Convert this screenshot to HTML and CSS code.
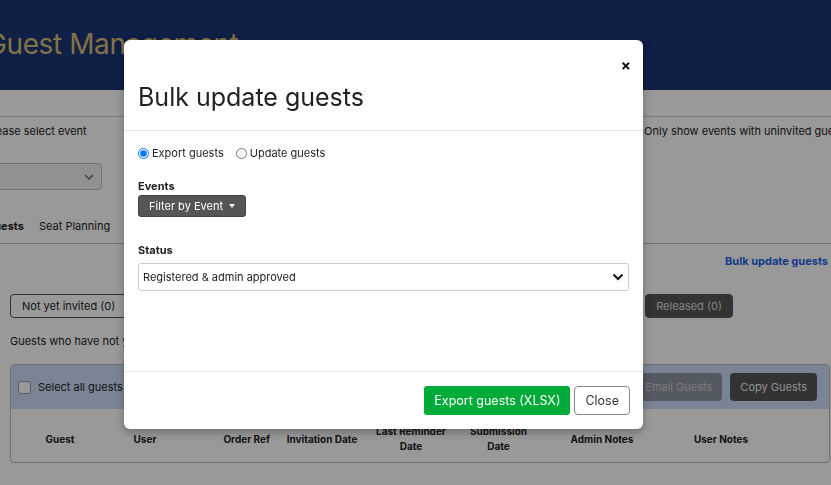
FILE: index.html
```html
<!DOCTYPE html>
<html lang="en">
<head>
    <meta charset="UTF-8">
    <title>Guest Management</title>
    <link rel="stylesheet" href="styles.css">
</head>
<body>
    <div class="page">
        <header class="page-header">
            <h1>Guest Management</h1>
        </header>

        <div class="page-body">
            <div class="event-row">
                <div class="event-pick">
                    <label class="field-label">Please select event</label>
                    <div class="fake-select">
                        <svg class="chev" width="10" height="6" viewBox="0 0 10 6"><path d="M1 1 L5 5 L9 1" fill="none" stroke="#666" stroke-width="1.4"/></svg>
                    </div>
                </div>
                <label class="uninvited">Only show events with uninvited guests</label>
            </div>

            <ul class="tabs">
                <li class="active">Guests</li>
                <li>Seat Planning</li>
            </ul>

            <div class="bulk-row"><a href="#" class="bulk-link">Bulk update guests</a></div>

            <div class="status-row">
                <button class="pill outline">Not yet invited (0)</button>
                <div class="status-mid">
                    <button class="pill dark">Invited (0)</button>
                    <button class="pill dark">Registered (0)</button>
                    <button class="pill dark">Approved (0)</button>
                    <button class="pill dark">Declined (0)</button>
                </div>
                <button class="pill dark">Released (0)</button>
            </div>

            <p class="hint">Guests who have not yet been invited to this event.</p>

            <div class="guest-table">
                <div class="toolbar">
                    <label class="select-all"><span class="box"></span>Select all guests</label>
                    <div class="toolbar-actions">
                        <button class="tb-btn muted">Email Guests</button>
                        <button class="tb-btn dark">Copy Guests</button>
                    </div>
                </div>
                <div class="thead">
                    <div class="th">Guest</div>
                    <div class="th">User</div>
                    <div class="th c-order">Order Ref</div>
                    <div class="th">Invitation Date</div>
                    <div class="th">Last Reminder<br>Date</div>
                    <div class="th">Submission<br>Date</div>
                    <div class="th">Admin Notes</div>
                    <div class="th">User Notes</div>
                </div>
            </div>
        </div>
    </div>

    <div class="backdrop"></div>

    <div class="modal">
        <div class="modal-header">
            <button class="modal-close">&times;</button>
            <h2>Bulk update guests</h2>
        </div>
        <div class="modal-body">
            <div class="radio-row">
                <label><input type="radio" name="mode" checked> Export guests</label>
                <label><input type="radio" name="mode"> Update guests</label>
            </div>

            <div class="group">
                <div class="group-label">Events</div>
                <button class="filter-btn">Filter by Event <span class="caret"></span></button>
            </div>

            <div class="group">
                <div class="group-label">Status</div>
                <div class="status-select">
                    <span>Registered &amp; admin approved</span>
                    <svg width="12" height="8" viewBox="0 0 12 8"><path d="M1.5 1.5 L6 6 L10.5 1.5" fill="none" stroke="#111" stroke-width="2"/></svg>
                </div>
            </div>
        </div>
        <div class="modal-footer">
            <button class="btn-export">Export guests (XLSX)</button>
            <button class="btn-close">Close</button>
        </div>
    </div>
</body>
</html>
```

FILE: styles.css
```css
html, body {
    margin: 0;
    padding: 0;
    height: 100%;
    overflow: hidden;
}
body {
    font-family: "Inter", "Noto Sans", sans-serif;
    font-size: 11px;
    color: #222;
    background-color: #fff;
}
button {
    font-family: inherit;
}
.page {
    margin-left: -14px;
    width: 860px;
}
.page-header {
    background-color: #193473;
    height: 90px;
    box-sizing: border-box;
    padding-top: 27px;
}
.page-header h1 {
    margin: 0;
    font-weight: 400;
    font-size: 28px;
    color: #d9c075;
    letter-spacing: -0.4px;
}
.page-body {
    padding-top: 26px;
}
.event-row {
    border-top: 1px solid #ccc;
    display: flex;
    justify-content: space-between;
    padding-top: 6px;
}
.field-label {
    display: block;
    line-height: 16px;
}
.fake-select {
    margin-top: 24px;
    width: 116px;
    height: 27px;
    border: 1px solid #bbb;
    border-radius: 4px;
    background-color: #f2f2f2;
    display: flex;
    align-items: center;
    justify-content: flex-end;
    padding-right: 7px;
    box-sizing: border-box;
}
.uninvited {
    width: 202px;
    line-height: 16px;
    white-space: nowrap;
}
.tabs {
    list-style: none;
    margin: 28px 0 0;
    padding: 0;
    display: flex;
    gap: 15px;
    border-bottom: 1px solid #bbb;
    height: 25px;
}
.tabs li {
    line-height: 16px;
}
.tabs li.active {
    font-weight: 700;
}
.bulk-row {
    display: flex;
    justify-content: flex-end;
    padding: 10px 18px 0 0;
    line-height: 14px;
}
.bulk-link {
    color: #1e62e6;
    font-weight: 700;
    text-decoration: none;
}
.status-row {
    display: flex;
    gap: 8px;
    margin-top: 26px;
    padding-left: 24px;
}
.status-mid {
    flex: 0 0 502px;
    display: flex;
    gap: 8px;
    overflow: hidden;
}
.pill {
    font-size: 11px;
    height: 24px;
    padding: 0 10px;
    border-radius: 4px;
}
.pill.outline {
    background: #fff;
    border: 1px solid #555;
    color: #222;
    padding: 0 11px;
}
.pill.dark {
    background: #555;
    border: 1px solid #555;
    color: #ddd;
}
.hint {
    margin: 15px 0 0 24px;
    line-height: 16px;
}
.guest-table {
    margin: 15px 0 0 24px;
    width: 818px;
    border: 1px solid #bbb;
    border-radius: 4px;
    overflow: hidden;
}
.toolbar {
    background-color: #cddcf7;
    height: 44px;
    display: flex;
    align-items: center;
    justify-content: space-between;
    padding: 0 12px 0 7px;
}
.select-all {
    display: flex;
    align-items: center;
    gap: 7px;
}
.box {
    width: 11px;
    height: 11px;
    border: 1px solid #999;
    border-radius: 3px;
    background: #fff;
}
.toolbar-actions {
    display: flex;
    gap: 8px;
}
.tb-btn {
    height: 28px;
    padding: 0 10px;
    border: 0;
    border-radius: 4px;
    font-size: 11px;
}
.tb-btn.muted {
    background: #8d96a4;
    color: #ccc;
}
.tb-btn.dark {
    background: #555;
    color: #eee;
}
.thead {
    display: grid;
    grid-template-columns: 98px 72px 98px 86px 92px 83px 124px 114px;
    align-items: center;
    box-sizing: border-box;
    height: 53px;
    padding-top: 7px;
    font-size: 10px;
    font-weight: 700;
    text-align: center;
    line-height: 15px;
}
.c-order {
    text-align: right;
    padding-right: 9px;
}
.backdrop {
    position: fixed;
    inset: 0;
    background-color: rgba(0, 0, 0, 0.4);
}
.modal {
    position: absolute;
    top: 40px;
    left: 124px;
    width: 519px;
    background: #fff;
    border-radius: 6px;
    box-shadow: 0 3px 9px rgba(0, 0, 0, 0.3);
}
.modal-header {
    padding: 19px 8px 0 14px;
    height: 71px;
    border-bottom: 1px solid #e5e5e5;
}
.modal-close {
    float: right;
    background: none;
    border: 0;
    font-size: 15px;
    font-weight: 700;
    line-height: 14px;
    padding: 0 4px;
    color: #111;
}
.modal-header h2 {
    margin: 0;
    padding-top: 23px;
    font-size: 25px;
    font-weight: 400;
    line-height: 30px;
    color: #222;
}
.modal-body {
    padding: 15px 14px 0;
    height: 225px;
}
.radio-row {
    display: flex;
    gap: 12px;
    line-height: 14px;
}
.radio-row label {
    display: flex;
    align-items: center;
}
.radio-row input {
    margin: 0 3px 0 0;
    width: 11px;
    height: 11px;
}
.group {
    margin-top: 19px;
}
.group + .group {
    margin-top: 26px;
}
.group-label {
    font-weight: 700;
    font-size: 11px;
    line-height: 14px;
    margin-bottom: 2px;
}
.filter-btn {
    background: #555;
    color: #fff;
    border: 1px solid #444;
    border-radius: 3px;
    height: 22px;
    padding: 0 10px;
    font-size: 11px;
    display: inline-flex;
    align-items: center;
    gap: 6px;
}
.caret {
    border-left: 3.5px solid transparent;
    border-right: 3.5px solid transparent;
    border-top: 4px solid #fff;
}
.status-select {
    margin-top: 6px;
    height: 26px;
    border: 1px solid #ccc;
    border-radius: 3px;
    display: flex;
    align-items: center;
    justify-content: space-between;
    padding: 0 4px;
    font-size: 11px;
}
.modal-footer {
    border-top: 1px solid #e5e5e5;
    display: flex;
    justify-content: flex-end;
    gap: 4px;
    padding: 14px 13px 14px;
}
.btn-export {
    background: #00ab3a;
    color: #fff;
    border: 0;
    border-radius: 3px;
    height: 29px;
    padding: 0 10px;
    font-size: 12.5px;
}
.btn-close {
    background: #fff;
    color: #333;
    border: 1px solid #888;
    border-radius: 4px;
    height: 29px;
    padding: 0 10px;
    font-size: 12.5px;
}
```
